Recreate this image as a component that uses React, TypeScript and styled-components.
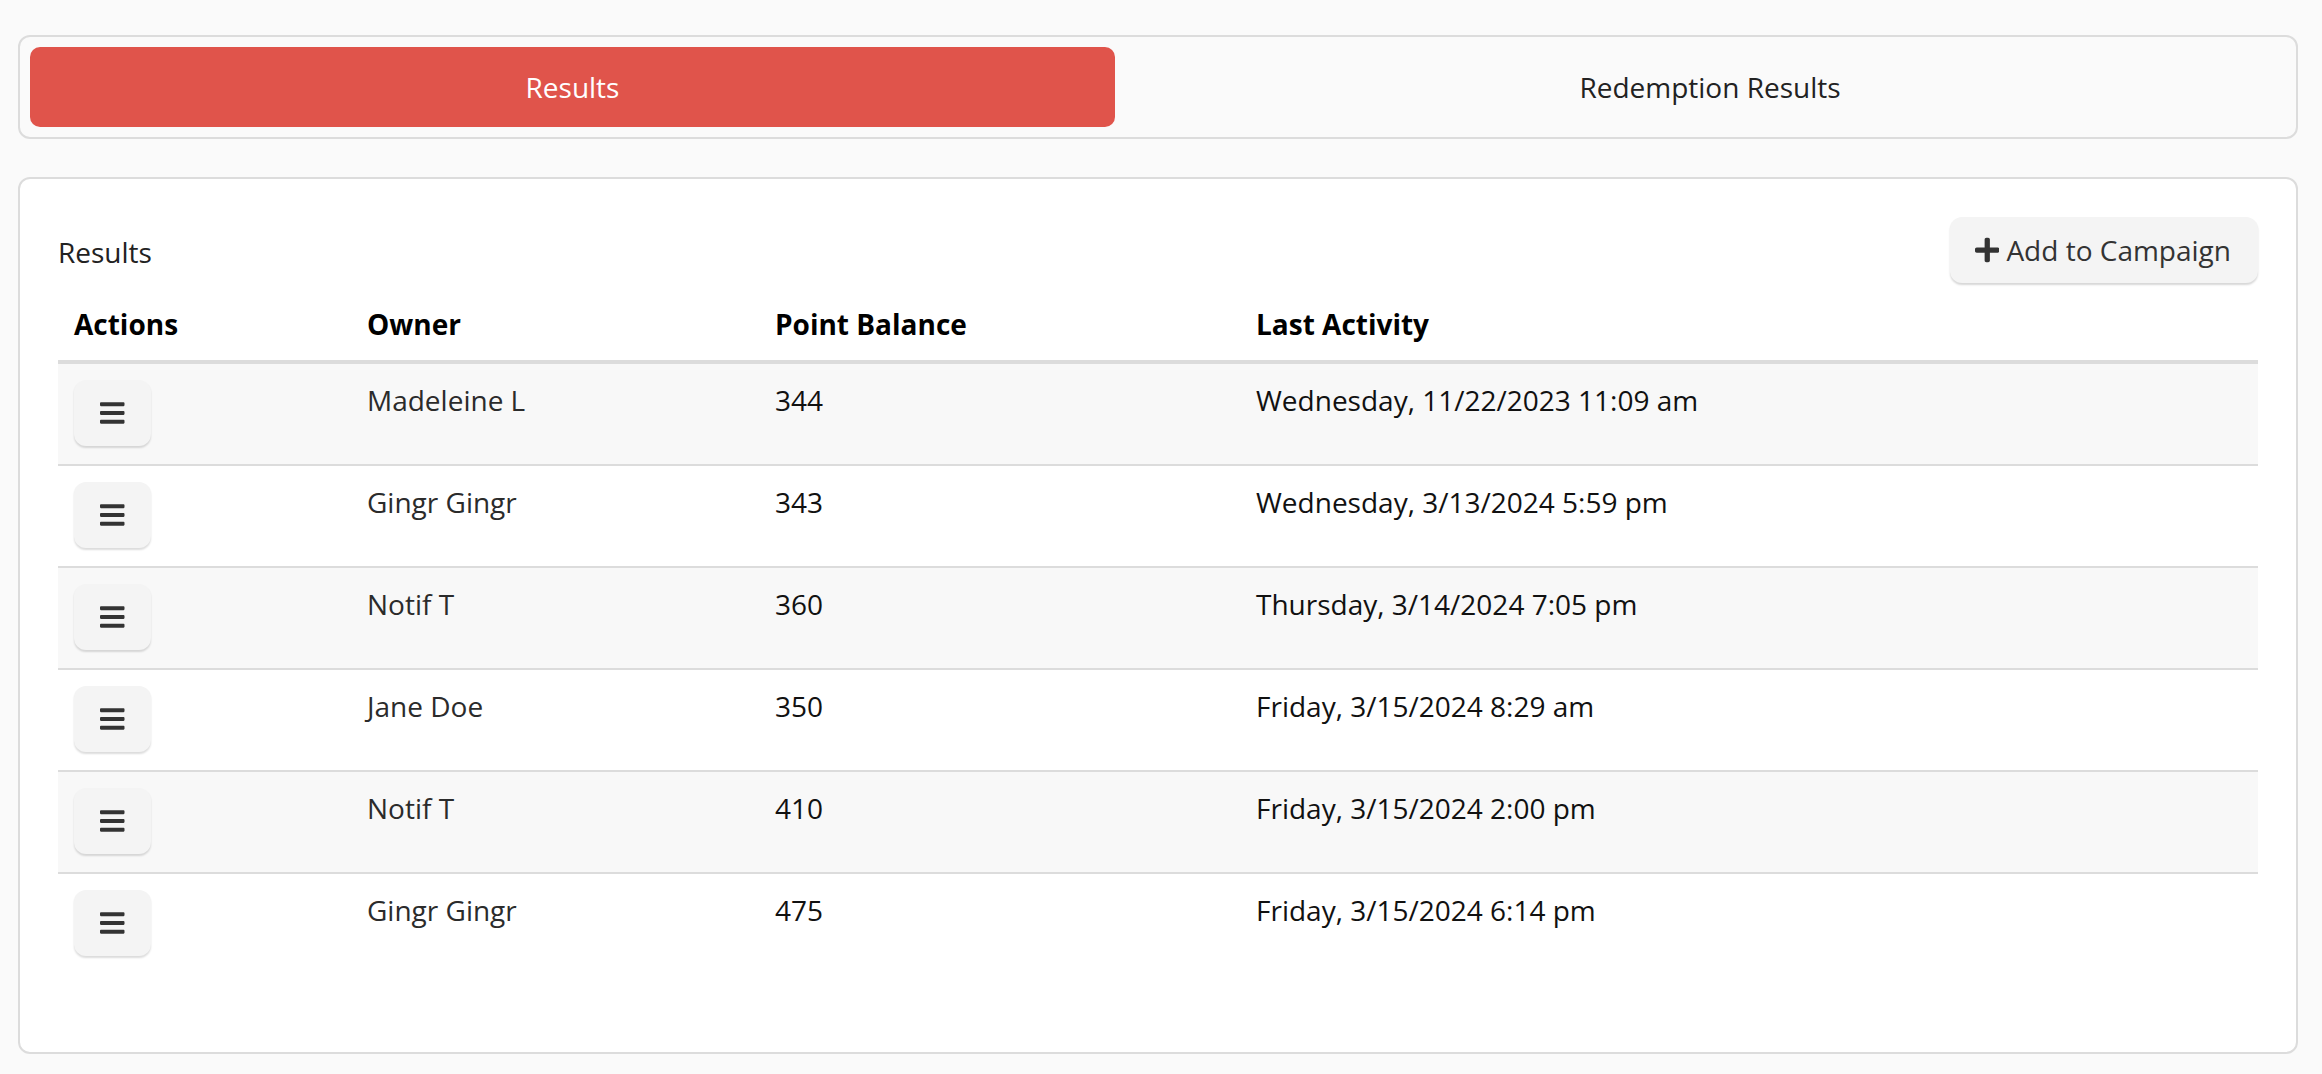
import React from "react";
import styled, { createGlobalStyle } from "styled-components";

const GlobalStyle = createGlobalStyle`
  html, body {
    margin: 0;
    padding: 0;
    background: #fafafa;
  }
  body {
    font-family: "Open Sans", "Liberation Sans", sans-serif;
    color: #333;
    -webkit-font-smoothing: antialiased;
  }
  * { box-sizing: border-box; }
`;

const Page = styled.div`
  padding: 35px 24px 20px 18px;
  display: flex;
  flex-direction: column;
  gap: 38px;
`;

const TabBar = styled.div`
  border: 2px solid #dcdcdc;
  border-radius: 12px;
  background: #fafafa;
  padding: 10px;
  display: grid;
  grid-template-columns: 1085px 1fr;
  column-gap: 19px;
`;

const Tab = styled.button<{ $active?: boolean }>`
  height: 80px;
  border: none;
  border-radius: 10px;
  font-family: "Open Sans", "Liberation Sans", sans-serif;
  font-size: 28px;
  line-height: 40px;
  cursor: pointer;
  background: ${(p) => (p.$active ? "#e0544b" : "transparent")};
  color: ${(p) => (p.$active ? "#ffffff" : "#222")};
  padding: 0;
`;

const Panel = styled.section`
  background: #ffffff;
  border: 2px solid #dcdcdc;
  border-radius: 12px;
  padding: 38px 38px 78px 38px;
`;

const PanelHeader = styled.div`
  display: flex;
  align-items: center;
  justify-content: space-between;
  height: 66px;
`;

const Title = styled.div`
  font-size: 28px;
  line-height: 40px;
  color: #222;
  margin-top: 4px;
`;

const ActionButton = styled.button`
  display: inline-flex;
  align-items: center;
  height: 66px;
  padding: 0 27px 0 25px;
  border: none;
  border-radius: 12px;
  background: #f4f4f4;
  box-shadow: 0 2px 2px rgba(0, 0, 0, 0.16);
  font-family: "Open Sans", "Liberation Sans", sans-serif;
  font-size: 28px;
  line-height: 40px;
  color: #333;
  cursor: pointer;
  gap: 7px;
  svg {
    width: 24.5px;
    height: 28px;
    fill: #333;
  }
`;

const Table = styled.div`
  display: flex;
  flex-direction: column;
`;

const columns = "293px 408px 481px 1fr";

const HeadRow = styled.div`
  display: grid;
  grid-template-columns: ${columns};
  border-bottom: 4px solid #dcdcdc;
`;

const HeadCell = styled.div`
  padding: 21px 16px 16px 16px;
  font-size: 28px;
  line-height: 40px;
  font-weight: 700;
  color: #000;
`;

const BodyRow = styled.div<{ $striped: boolean; $last: boolean }>`
  display: grid;
  grid-template-columns: ${columns};
  height: ${(p) => (p.$last ? "100px" : "102px")};
  background: ${(p) => (p.$striped ? "#f8f8f8" : "#ffffff")};
  border-bottom: ${(p) => (p.$last ? "none" : "2px solid #dcdcdc")};
`;

const Cell = styled.div<{ $muted?: boolean }>`
  padding: 16px;
  font-size: 28px;
  line-height: 40px;
  color: ${(p) => (p.$muted ? "#2b2b2b" : "#111")};
  white-space: nowrap;
`;

const MenuButton = styled.button`
  width: 77px;
  height: 66px;
  border: none;
  border-radius: 12px;
  background: #f4f4f4;
  box-shadow: 0 2px 2px rgba(0, 0, 0, 0.14);
  display: flex;
  align-items: center;
  justify-content: center;
  cursor: pointer;
  padding: 0;
  svg {
    width: 24.5px;
    height: 28px;
    fill: #333;
  }
`;

const BarsIcon = () => (
  <svg viewBox="0 0 448 512" aria-hidden="true">
    <path d="M16 132h416c8.837 0 16-7.163 16-16V76c0-8.837-7.163-16-16-16H16C7.163 60 0 67.163 0 76v40c0 8.837 7.163 16 16 16zm0 160h416c8.837 0 16-7.163 16-16v-40c0-8.837-7.163-16-16-16H16c-8.837 0-16 7.163-16 16v40c0 8.837 7.163 16 16 16zm0 160h416c8.837 0 16-7.163 16-16v-40c0-8.837-7.163-16-16-16H16c-8.837 0-16 7.163-16 16v40c0 8.837 7.163 16 16 16z" />
  </svg>
);

const PlusIcon = () => (
  <svg viewBox="0 0 448 512" aria-hidden="true">
    <path d="M416 208H272V64c0-17.67-14.33-32-32-32h-32c-17.67 0-32 14.33-32 32v144H32c-17.67 0-32 14.33-32 32v32c0 17.67 14.33 32 32 32h144v144c0 17.67 14.33 32 32 32h32c17.67 0 32-14.33 32-32V304h144c17.67 0 32-14.33 32-32v-32c0-17.67-14.33-32-32-32z" />
  </svg>
);

const rows = [
  { owner: "Madeleine L", points: 344, last: "Wednesday, 11/22/2023 11:09 am" },
  { owner: "Gingr Gingr", points: 343, last: "Wednesday, 3/13/2024 5:59 pm" },
  { owner: "Notif T", points: 360, last: "Thursday, 3/14/2024 7:05 pm" },
  { owner: "Jane Doe", points: 350, last: "Friday, 3/15/2024 8:29 am" },
  { owner: "Notif T", points: 410, last: "Friday, 3/15/2024 2:00 pm" },
  { owner: "Gingr Gingr", points: 475, last: "Friday, 3/15/2024 6:14 pm" },
];

export default function App() {
  return (
    <>
      <GlobalStyle />
      <Page>
        <TabBar>
          <Tab $active>Results</Tab>
          <Tab>Redemption Results</Tab>
        </TabBar>
        <Panel>
          <PanelHeader>
            <Title>Results</Title>
            <ActionButton>
              <PlusIcon />
              <span>Add to Campaign</span>
            </ActionButton>
          </PanelHeader>
          <Table>
            <HeadRow>
              <HeadCell>Actions</HeadCell>
              <HeadCell>Owner</HeadCell>
              <HeadCell>Point Balance</HeadCell>
              <HeadCell>Last Activity</HeadCell>
            </HeadRow>
            {rows.map((r, i) => (
              <BodyRow key={i} $striped={i % 2 === 0} $last={i === rows.length - 1}>
                <Cell>
                  <MenuButton aria-label="Actions">
                    <BarsIcon />
                  </MenuButton>
                </Cell>
                <Cell $muted>{r.owner}</Cell>
                <Cell>{r.points}</Cell>
                <Cell>{r.last}</Cell>
              </BodyRow>
            ))}
          </Table>
        </Panel>
      </Page>
    </>
  );
}
